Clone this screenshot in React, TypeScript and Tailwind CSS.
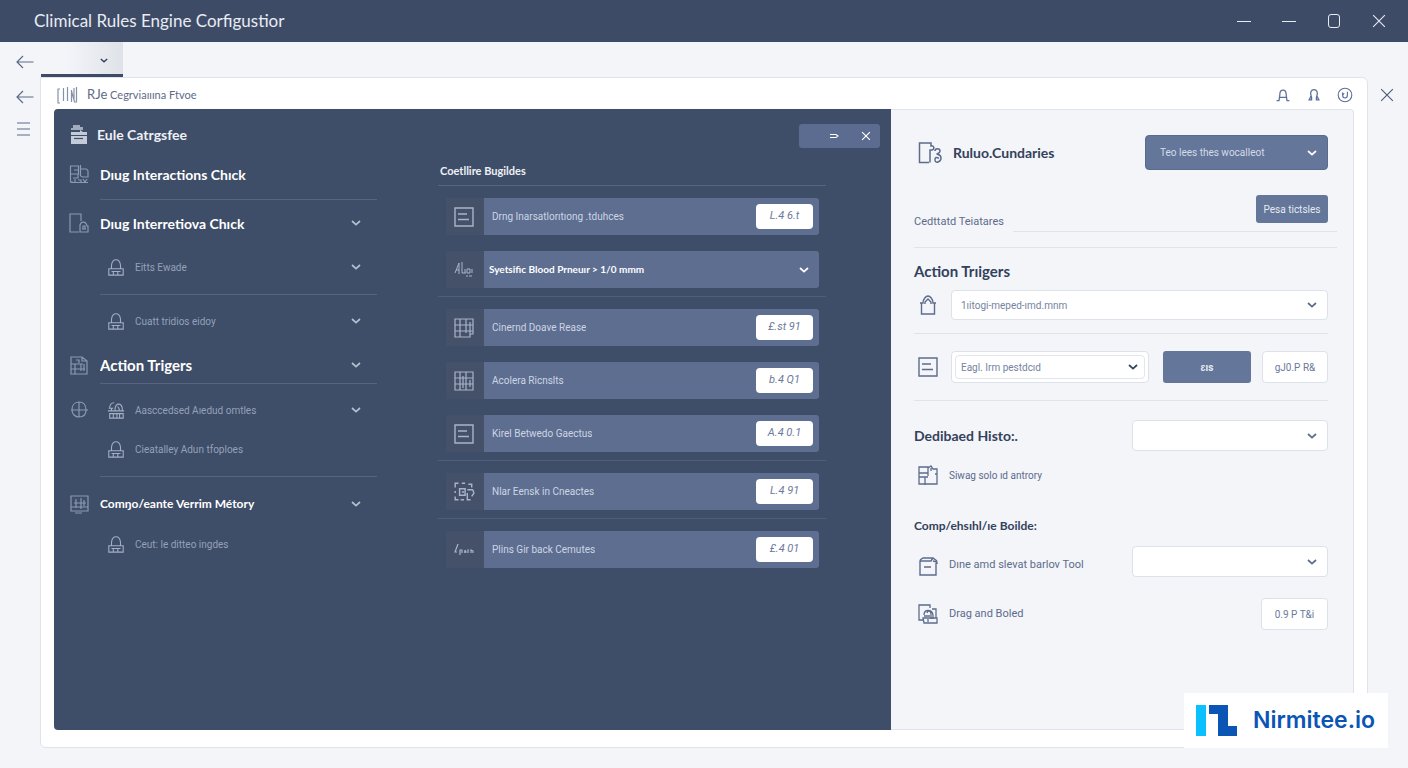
import type { ReactNode } from "react";

const heading = "font-['Lato',sans-serif]";

/* ---------- icons ---------- */

type IconProps = { className?: string };

function Glyph({ className = "", box = 20, children }: IconProps & { box?: number; children: ReactNode }) {
  return (
    <svg
      viewBox={`0 0 ${box} ${box}`}
      fill="none"
      stroke="currentColor"
      strokeWidth="1.2"
      aria-hidden="true"
      className={`shrink-0 ${className}`}
    >
      {children}
    </svg>
  );
}

const Chevron = ({ className = "h-[6px] w-[10px]" }: IconProps) => (
  <svg viewBox="0 0 10 6" fill="none" stroke="currentColor" strokeWidth="1.7" aria-hidden="true" className={`shrink-0 ${className}`}>
    <path d="M1 1l4 3.6L9 1" />
  </svg>
);

const ArrowLeft = () => (
  <Glyph className="size-5">
    <path d="M18.5 10H2M8 4L2 10l6 6" />
  </Glyph>
);

const Cross = ({ className = "" }: IconProps) => (
  <Glyph className={className}>
    <path d="M3.5 3.5l13 13M16.5 3.5l-13 13" />
  </Glyph>
);

const Cabinet = () => (
  <svg viewBox="0 0 20 20" aria-hidden="true" className="size-5 shrink-0 text-[#c3cbd9]">
    <path d="M4 1h7v2h3v3H2V4h2z" fill="currentColor" opacity=".75" />
    <path d="M2 8h9V6l3 2h4v3H2z" fill="currentColor" />
    <path d="M2 12h16v8H2z" fill="currentColor" />
    <path d="M5 14.5h9" stroke="#3e4d68" strokeWidth="1.2" />
  </svg>
);

const Blocks = () => (
  <Glyph className="size-5">
    <path d="M1.500 2h8v8h-8zM5 6h4M11.500 1v11M11.500 5h6l1.500 2v6h-5l-2.500-1M1.500 10v8H4M4 14h5v-4M2 18.500h17M6 15v3M9 16h3v2M14 15l2 3 2-3" />
  </Glyph>
);

const DocLock = () => (
  <Glyph className="size-5">
    <path d="M10 19H1V1h11v7M11 19v-7c1-4 6-4 7 1h1v6zM14 13h2v3h-2zM13 16h4" />
  </Glyph>
);

const DocGrid = () => (
  <Glyph className="size-5">
    <path d="M2 2h11l5 4v13H2zM13 2v4h5M2 9h12M7 5h3v3M6 9v10M2 14h14M12 9v7M15 9v7" />
  </Glyph>
);

const Globe = () => (
  <Glyph className="size-5">
    <path d="M10 2c5 0 7 3 7 8s-3 7-7 7-7-3-7-7 2-8 7-8zM2 10h17M10 2v15" />
  </Glyph>
);

const SheetGrid = () => (
  <Glyph className="size-5">
    <path d="M2 2h17v15H2zM5 9h12M7 5v9M12 4v11M2 13h17M15 6v6M6 19h7" />
  </Glyph>
);

const Padlock = () => (
  <Glyph className="size-[18px]">
    <path d="M5 12V8c1-8 9-8 10 0v4M2 12h16v7H2zM7 15v4M12 15v4M5 15h10" />
  </Glyph>
);

const DoubleLock = () => (
  <Glyph className="size-[18px]">
    <path d="M9 11V8c1-6 7-6 8 0v3M3 8c0-4 2-6 5-6M2 8h5M5 8v3M1 11h18M3 14h15v5H3zM7 14v5M11 14v5M14 14v5M12 6l2 4" />
  </Glyph>
);

const Note = ({ className = "size-5" }: IconProps) => (
  <Glyph className={className}>
    <path d="M1 1h18v18H1zM4 7h9M4 12.500h11" strokeWidth="1.4" />
  </Glyph>
);

const Vitals = () => (
  <Glyph className="size-5">
    <path d="M1 13L5 3v11M5 10H2M8 2v11h4M11 9v4M13 13V9h3v4h-3M18 9v4M12 16h2M15 16h3" strokeWidth="1" />
  </Glyph>
);

const Table = () => (
  <Glyph className="size-5">
    <path d="M1 1h18v15h-3v3H1zM1 7h18M1 13h18M6 1v18M12 1v14M16 4v12" />
  </Glyph>
);

const TableDense = () => (
  <Glyph className="size-5">
    <path d="M1 1h18v18H1zM1 7h18M1 13h18M6 1v18M9 5v12M12 1v18M16 9v7" />
  </Glyph>
);

const Scan = () => (
  <Glyph className="size-[22px]">
    <path d="M2 6V2h3M8 2h3M14 3h3v3M2 9v2M2 14v3h3M6 7h5v6H6zM8 10h2M13 8h5M18 8l1 3-2 3M13 11v6h3M7 17h3" strokeWidth="1.3" />
  </Glyph>
);

const Signature = () => (
  <Glyph className="size-5">
    <path d="M4 4L1 12h2M6 15v-5h2v3M10 12h2l-1-2v3M14 13v-3h1M17 13v-3l2 1v2" />
  </Glyph>
);

const DocKey = () => (
  <Glyph box={24} className="size-6">
    <path d="M11 21.500H1.500V2H13v3c3-1 4 3 1 4h-2v12.500M17 10c0-3 5-3 5 0s-3 2-3 3 4 0 4 4-6 6-6 2 2-2 4-2" strokeWidth="1.5" />
  </Glyph>
);

const House = () => (
  <Glyph className="size-5">
    <path d="M2 8h3c0-4 3-7 5-7s5 3 5 7h3M3.500 8v11h13V8M7 9V7l3-3 3 3v2" strokeWidth="1.4" />
  </Glyph>
);

const Puzzle = () => (
  <Glyph className="size-5">
    <path d="M1 2h9v6H1zM10 3l3-2 2 3h4v5h-2M19 9v10H1V8M1 12h6v8M7 12h3M13 3v3M10 8v3" strokeWidth="1.3" />
  </Glyph>
);

const Clipboard = () => (
  <Glyph className="size-5">
    <path d="M2 4l3-2h10l4 3M3 5H2v14h16V7M2 5h11l2-3M15 5l4 1v2M6 11h7" strokeWidth="1.4" />
  </Glyph>
);

const Stack = () => (
  <Glyph className="size-5">
    <path d="M5 16H1V1h11v3M6 11c0-6 8-6 9 0v4M9 9c1-3 4-2 4 1v5M6 12h6M14 5h4v9M5 14h14v5H6zM10 15v3" strokeWidth="1.3" />
  </Glyph>
);

const Bars = () => (
  <svg viewBox="0 0 22 18" fill="none" stroke="currentColor" aria-hidden="true" className="h-[18px] w-[22px] shrink-0 text-[#8591a8]">
    <path d="M3 3H1v14h2M6.500 2v13M10.500 1v14M14.500 4v12M14.500 5l3 11h2V1M17 2v13" strokeWidth="1.2" />
  </svg>
);

const Person = () => (
  <Glyph className="size-4">
    <path d="M2 17h3l1-7c0-8 8-8 8 0l1 7h3M6 13h8" strokeWidth="1.6" />
  </Glyph>
);

const Bell = () => (
  <Glyph className="size-4">
    <path d="M3 16h4v-3c-6-13 12-13 6 0v3h4M4 16l2-4M16 16l-2-4" strokeWidth="1.6" />
  </Glyph>
);

const Help = () => (
  <Glyph className="size-4">
    <circle cx="10" cy="10" r="8.500" strokeWidth="1.4" />
    <path d="M7 7v3c0 5 6 5 6 0V6M7 10l2-2" strokeWidth="1.4" />
  </Glyph>
);

/* ---------- shared controls ---------- */

function SelectBox({
  label,
  options,
  className,
  chevron = "text-[#5d6b89]",
}: {
  label: string;
  options: string[];
  className: string;
  chevron?: string;
}) {
  return (
    <div className="relative flex min-w-0 items-center">
      <select aria-label={label} className={`w-full appearance-none rounded-[4px] border pr-8 text-[10px] outline-none ${className}`}>
        {options.map((option) => (
          <option key={option}>{option}</option>
        ))}
      </select>
      <Chevron className={`pointer-events-none absolute right-[11px] h-[6px] w-[10px] ${chevron}`} />
    </div>
  );
}

/* ---------- rule categories ---------- */

type NavRow = {
  icon?: ReactNode;
  subIcon?: ReactNode;
  text: string;
  height: string;
  title?: string;
  open?: boolean;
  divider?: string;
};

const navRows: NavRow[] = [
  { icon: <Blocks />, text: "Dıug Interactions Chıck", height: "h-[30px]", title: "text-[14px]", divider: "mt-[10px]" },
  { icon: <DocLock />, text: "Dıug Interretiova Chıck", height: "h-[46px]", title: "text-[14px]", open: true },
  { subIcon: <Padlock />, text: "Eitts Ewade", height: "h-[42px]", open: true, divider: "mt-[6px]" },
  { subIcon: <Padlock />, text: "Cuatt tridios eidoy", height: "h-[52px]", open: true },
  { icon: <DocGrid />, text: "Action Trigers", height: "h-[36px]", title: "text-[15px]", open: true, divider: "" },
  { icon: <Globe />, subIcon: <DoubleLock />, text: "Aasccedsed Aıedud omtles", height: "h-[52px]", open: true },
  { subIcon: <Padlock />, text: "Cieatalley Adun tfoploes", height: "h-[26px]", divider: "mt-[14px]" },
  { icon: <SheetGrid />, text: "Comŋo/eante Verrim Métory", height: "h-[54px]", title: "text-[12px]", open: true },
  { subIcon: <Padlock />, text: "Ceut: le ditteo ingdes", height: "h-[26px]" },
];

function Categories() {
  return (
    <nav aria-label="Rule categories" className="min-w-0 pl-[15px]">
      <h2 className={`${heading} flex h-[50px] items-center gap-2 text-[14px] font-bold text-[#eef1f6]`}>
        <Cabinet />
        Eule Catrgsfee
      </h2>
      <ul>
        {navRows.map((row) => (
          <li key={row.text}>
            <button type="button" className={`flex w-full items-center text-left ${row.height}`}>
              <span className="w-[31px] shrink-0 text-[#8b99b3]">{row.icon}</span>
              {row.subIcon && <span className="w-[35px] shrink-0 pl-[7px] text-[#a3afc4]">{row.subIcon}</span>}
              <span
                className={
                  row.title
                    ? `${heading} ${row.title} min-w-0 flex-1 truncate font-bold text-white`
                    : "min-w-0 flex-1 truncate text-[10px] text-[#95a1b8]"
                }
              >
                {row.text}
              </span>
              {row.open && <Chevron className="mr-4 h-[6px] w-[10px] text-[#b4bed0]" />}
            </button>
            {row.divider !== undefined && <div className={`ml-[31px] h-px bg-[#56647f] ${row.divider}`} />}
          </li>
        ))}
      </ul>
    </nav>
  );
}

/* ---------- condition builder ---------- */

type Condition = { icon: ReactNode; text: string; value?: string };

const conditionGroups: Condition[][] = [
  [
    { icon: <Note />, text: "Drng Inarsatlorıtıong .tduhces", value: "L.4 6.t" },
    { icon: <Vitals />, text: "Syetsific Blood Prneuır > 1/0 mmm" },
  ],
  [
    { icon: <Table />, text: "Cinernd Doave Rease", value: "£.st 91" },
    { icon: <TableDense />, text: "Acolera Ricnslts", value: "b.4 Q1" },
    { icon: <Note />, text: "Kirel Betwedo Gaectus", value: "A.4 0.1" },
  ],
  [{ icon: <Scan />, text: "Nlar Eensk in Cneactes", value: "L.4 91" }],
  [{ icon: <Signature />, text: "Plins Gir back Cemutes", value: "£.4 01" }],
];

function ConditionBuilder() {
  return (
    <section className="min-w-0 pt-[15px] pl-[61px]">
      <div className="mr-[11px] ml-auto flex h-6 w-[81px] items-center justify-end rounded-[3px] bg-[#5b6c90] text-white">
        <button type="button" aria-label="Restore" className="flex size-6 items-center justify-center">
          <svg viewBox="0 0 10 6" fill="none" stroke="currentColor" aria-hidden="true" className="h-[6px] w-[10px]">
            <path d="M1 1.500h6l2 1.500-2 1.500H1" strokeWidth="1.1" />
          </svg>
        </button>
        <button type="button" aria-label="Close" className="mr-[2px] ml-[8px] flex size-6 items-center justify-center">
          <Cross className="size-3 stroke-[2]" />
        </button>
      </div>
      <div className="mr-[65px]">
        <h3 className={`${heading} mt-[14px] border-b border-[#56647f] pb-[5px] pl-[2px] text-[11px] leading-[18px] font-bold text-[#eef1f6]`}>
          Coetllire Bugildes
        </h3>
        {conditionGroups.map((group, index) => (
          <ul
            key={index}
            className="flex flex-col gap-4 border-b border-[#505e7a] pt-3 pr-[7px] pb-2 pl-2 last:border-b-0"
          >
            {group.map((row) => (
              <li key={row.text} className="flex h-[37px]">
                <span className="flex w-[38px] shrink-0 items-center justify-center bg-[#445169] pr-[2px] text-[#a9b4c8]">{row.icon}</span>
                {row.value ? (
                  <div className="flex min-w-0 flex-1 items-center justify-between rounded-r-[3px] bg-[#5d6e91] pr-[6px] pl-2">
                    <span className="truncate text-[10px] text-[#cdd5e3]">{row.text}</span>
                    <button type="button" className="h-[25px] w-[57px] shrink-0 rounded-[4px] bg-white text-[11px] text-[#6c7a99] italic">
                      {row.value}
                    </button>
                  </div>
                ) : (
                  <div className="relative flex min-w-0 flex-1 items-center text-white">
                    <select
                      aria-label="Condition"
                      className={`${heading} h-full w-full appearance-none rounded-r-[3px] bg-[#5d6e91] pr-8 pl-[5px] text-[10px] font-bold outline-none`}
                    >
                      <option>{row.text}</option>
                    </select>
                    <Chevron className="pointer-events-none absolute right-[10px] h-[6px] w-[10px]" />
                  </div>
                )}
              </li>
            ))}
          </ul>
        ))}
      </div>
    </section>
  );
}

/* ---------- rule summaries ---------- */

const line = "h-px bg-[#dfe3ea]";
const outlined = "border border-[#dde1ea] bg-white text-[#6c7a99]";
const sideTitle = `${heading} font-bold text-[#33415c]`;

function Summaries() {
  return (
    <aside className="min-w-0 rounded-r-[4px] border border-l-0 border-[#dfe3ea] bg-[#f3f5f9] pr-[25px] pl-[23px] text-[#5d6b8c]">
      <div className="flex items-center pt-[25px]">
        <span className="ml-1 w-[35px] shrink-0">
          <DocKey />
        </span>
        <h2 className={`${sideTitle} min-w-0 flex-1 truncate text-[14px]`}>Ruluo.Cundaries</h2>
        <div className="w-[183px]">
          <SelectBox
            label="Workflow"
            options={["Teo lees thes wocalleot"]}
            className="h-[35px] border-[#5b6a8e] bg-[#64769a] pl-[14px] text-[#d5dbe7]"
            chevron="text-white"
          />
        </div>
      </div>
      <div className="-mr-[9px] flex items-end pt-[25px]">
        <label htmlFor="field" className="w-[99px] shrink-0 text-[11px] leading-5">
          Cedttatd Teiatares
        </label>
        <div className="flex min-w-0 flex-1 border-b border-[#dfe3ea] pr-[9px] pb-2">
          <input id="field" type="text" className="min-w-0 flex-1 bg-transparent outline-none" />
          <button type="button" className="h-7 w-[72px] shrink-0 rounded-[3px] bg-[#64769a] text-[10px] text-[#e6eaf2]">
            Pesa tictsles
          </button>
        </div>
      </div>
      <div className={`-mr-[9px] mt-[15px] ${line}`} />

      <h3 className={`${sideTitle} pt-[13px] text-[15px] leading-5`}>Action Trıigers</h3>
      <div className="flex items-center pt-[9px]">
        <span className="ml-1 w-[33px] shrink-0">
          <House />
        </span>
        <div className="min-w-0 flex-1">
          <SelectBox label="Trigger" options={["1ıitogi-meped-ımd.mnm"]} className="h-[30px] border-[#dde1ea] bg-white pl-[9px] text-[#76839f]" />
        </div>
      </div>
      <div className={`mt-[13px] ${line}`} />
      <div className="flex items-center py-[17px]">
        <span className="ml-1 w-[33px] shrink-0">
          <Note />
        </span>
        <div className="min-w-0 flex-1 rounded-[4px] border border-[#dde1ea] bg-white p-[3px]">
          <SelectBox
            label="Protocol"
            options={["Eagl. Irm pestdcıd"]}
            className="h-6 rounded-[2px] border-[#e3e6ee] pl-[5px] text-[#76839f]"
            chevron="-mr-1 text-[#33415c]"
          />
        </div>
        <button type="button" className="ml-[14px] h-8 w-[88px] shrink-0 rounded-[3px] bg-[#64769a] text-[10px] font-bold text-[#e6eaf2]">
          ɛıs
        </button>
        <button type="button" className={`ml-[11px] h-8 w-[66px] shrink-0 rounded-[4px] text-[10px] ${outlined}`}>
          gJ0.P R&amp;
        </button>
      </div>
      <div className={line} />

      <div className="flex items-center pt-[19px]">
        <h3 className={`${sideTitle} min-w-0 flex-1 truncate text-[14px]`}>Dedibaed Histo:.</h3>
        <div className="w-[196px]">
          <SelectBox label="History" options={[""]} className="h-[31px] border-[#dde1ea] bg-white" />
        </div>
      </div>
      <div className="flex items-center pt-[14px] text-[10px]">
        <span className="ml-1 w-[31px] shrink-0">
          <Puzzle />
        </span>
        Siwag solo ıd antrory
      </div>

      <h3 className={`${sideTitle} pt-[31px] text-[12px] leading-5`}>Comp/ehsıhl/ıe Boilde:</h3>
      <div className="flex items-center pt-[10px] text-[11px]">
        <div className="flex min-w-0 flex-1 items-center pt-2">
          <span className="ml-1 w-[31px] shrink-0">
            <Clipboard />
          </span>
          <span className="truncate">Dıne amd slevat barlov Tool</span>
        </div>
        <div className="w-[196px]">
          <SelectBox label="Tool" options={[""]} className="h-[31px] border-[#dde1ea] bg-white" />
        </div>
      </div>
      <div className="flex items-center pt-[21px] text-[11px]">
        <span className="ml-1 w-[31px] shrink-0">
          <Stack />
        </span>
        <span className="min-w-0 flex-1 truncate">Drag and Boled</span>
        <button type="button" className={`h-8 w-[67px] shrink-0 rounded-[4px] text-[10px] ${outlined}`}>
          0.9 P T&amp;i
        </button>
      </div>
    </aside>
  );
}

/* ---------- page ---------- */

export default function App() {
  return (
    <div className="relative flex min-h-screen flex-col bg-[#f3f5f9] font-['Roboto','Liberation_Sans',sans-serif]">
      <header className="flex h-[42px] items-center justify-between bg-[#3e4b66] pr-[19px] pl-[34px] text-[#e8ecf3]">
        <h1 className={`${heading} text-[17px]`}>Climical Rules Engine Corfigustior</h1>
        <div className="flex items-center gap-[25px]">
          <button type="button" aria-label="Hide" className="flex size-5 items-center justify-center">
            <span className="h-px w-[14px] bg-current" />
          </button>
          <button type="button" aria-label="Minimize" className="flex size-5 items-center justify-center">
            <span className="h-px w-[14px] bg-current" />
          </button>
          <button type="button" aria-label="Maximize" className="flex size-5 items-center justify-center">
            <span className="h-[14px] w-[12px] rounded-[3px] border border-current" />
          </button>
          <button type="button" aria-label="Close window" className="flex size-5 items-center justify-center">
            <Cross className="size-[18px]" />
          </button>
        </div>
      </header>

      <main className="flex flex-1 pb-5">
        <div className="flex w-10 shrink-0 flex-col items-center gap-[15px] pt-[10px] pl-[9px] text-[#5d6b89]">
          <button type="button" aria-label="Back">
            <ArrowLeft />
          </button>
          <button type="button" aria-label="Previous">
            <ArrowLeft />
          </button>
          <button type="button" aria-label="Menu" className="-mt-[3px]">
            <Glyph className="size-5">
              <path d="M2 4h13M2 10h13M2 16h13" />
            </Glyph>
          </button>
        </div>

        <div className="flex min-w-0 flex-1 flex-col">
          <button
            type="button"
            aria-label="Open tab list"
            className="ml-px flex h-[35px] w-[82px] items-center justify-end border-b-[3px] border-[#3e4b66] bg-linear-to-r from-[#f3f5f9] from-30% to-[#dfe2e8] pr-[15px]"
          >
            <Chevron className="mt-1 h-[5px] w-2 text-[#33415c]" />
          </button>

          <div className="flex flex-1 flex-col rounded-[6px] rounded-tl-none border border-[#dfe3ea] bg-white px-[13px] pb-[17px]">
            <div className="flex h-[31px] items-center pt-[2px] pl-[3px] text-[#5d6b89]">
              <Bars />
              <p className={`${heading} ml-2 flex-1 text-[11px]`}>
                <span className="text-[13px]">RJe</span> Cegrviaııına Ftvoe
              </p>
              <div className="mr-[1px] flex gap-[15px] text-[#5d6f9b]">
                <button type="button" aria-label="Account">
                  <Person />
                </button>
                <button type="button" aria-label="Notifications">
                  <Bell />
                </button>
                <button type="button" aria-label="Help">
                  <Help />
                </button>
              </div>
            </div>
            <div className="grid flex-1 grid-cols-[837fr_463fr]">
              <div className="grid grid-cols-[323fr_514fr] rounded-l-[4px] bg-[#3e4d68]">
                <Categories />
                <ConditionBuilder />
              </div>
              <Summaries />
            </div>
          </div>
        </div>

        <div className="flex w-10 shrink-0 justify-center pt-[44px] pr-[3px] text-[#4a5878]">
          <button type="button" aria-label="Close panel" className="size-[18px]">
            <Cross className="size-[18px]" />
          </button>
        </div>
      </main>

      <a href="#nirmitee" className="absolute right-5 bottom-5 flex h-[55px] w-[204px] items-center bg-white pl-3 text-[#0b55b5]">
        <svg viewBox="0 0 41 31" aria-hidden="true" className="h-[31px] w-[41px] shrink-0">
          <path d="M0 0h10v31H0z" fill="#0bc0ff" />
          <path d="M13 0h19v21h9v10H22V9h-9z" fill="currentColor" />
        </svg>
        <span className="ml-4 font-['Inter','Liberation_Sans',sans-serif] text-[23px] font-semibold">Nirmitee.io</span>
      </a>
    </div>
  );
}
